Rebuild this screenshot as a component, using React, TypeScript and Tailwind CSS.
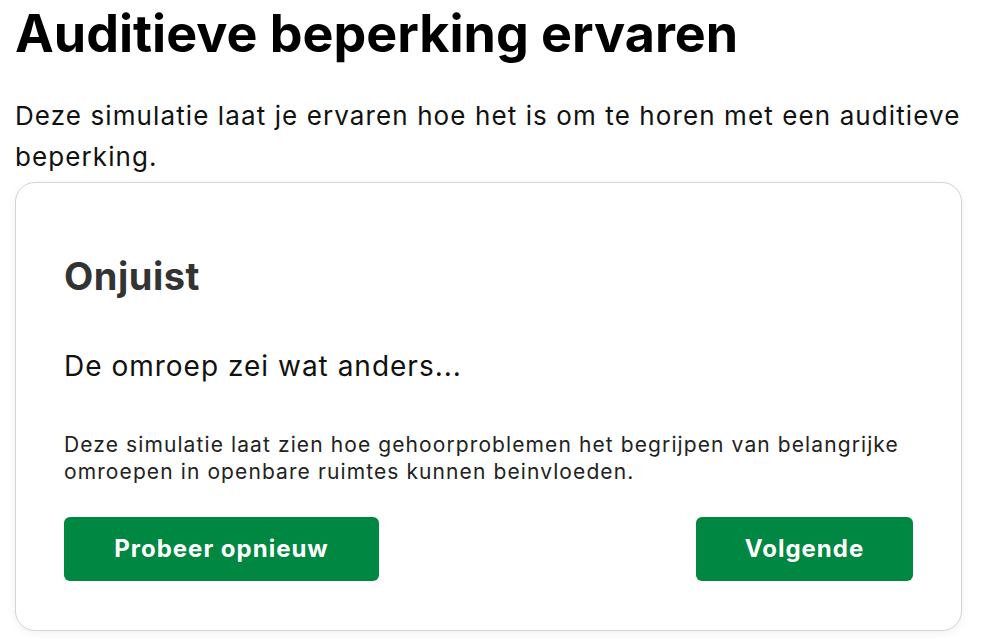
export default function App() {
  return (
    <div className="min-h-screen bg-white font-['Inter','Liberation_Sans',sans-serif] text-black">
      <div className="ml-[15px] w-[947px] pt-[3px]">
        <h1 className="text-[52px] leading-[62px] font-bold text-black">
          Auditieve beperking ervaren
        </h1>
        <p className="mt-[30px] text-[26px] leading-[41px] tracking-[1.1px] text-[#111]">
          Deze simulatie laat je ervaren hoe het is om te horen met een auditieve beperking.
        </p>

        {/* Result card */}
        <div className="mt-[5px] rounded-[20px] border border-[#d4d4d4] bg-white px-12 pt-[70px] pb-[49px] shadow-[0_2px_8px_rgba(0,0,0,0.06)]">
          <h2 className="text-[38px] leading-[46px] font-bold tracking-[0.5px] text-[#333]">Onjuist</h2>
          <p className="mt-[49px] text-[28px] leading-[36px] tracking-[1px] text-[#111]">
            De omroep zei wat anders...
          </p>
          <p className="mt-[47px] text-[21px] leading-[27px] tracking-[1.1px] text-[#222]">
            Deze simulatie laat zien hoe gehoorproblemen het begrijpen van belangrijke omroepen in openbare
            ruimtes kunnen beinvloeden.
          </p>
          <div className="mt-[32px] flex items-center justify-between">
            <button className="h-16 w-[315px] rounded-md bg-[#008741] text-[24px] font-bold tracking-[1px] text-white">
              Probeer opnieuw
            </button>
            <button className="h-16 w-[217px] rounded-md bg-[#008741] text-[24px] font-bold tracking-[1px] text-white">
              Volgende
            </button>
          </div>
        </div>
      </div>
    </div>
  )
}
